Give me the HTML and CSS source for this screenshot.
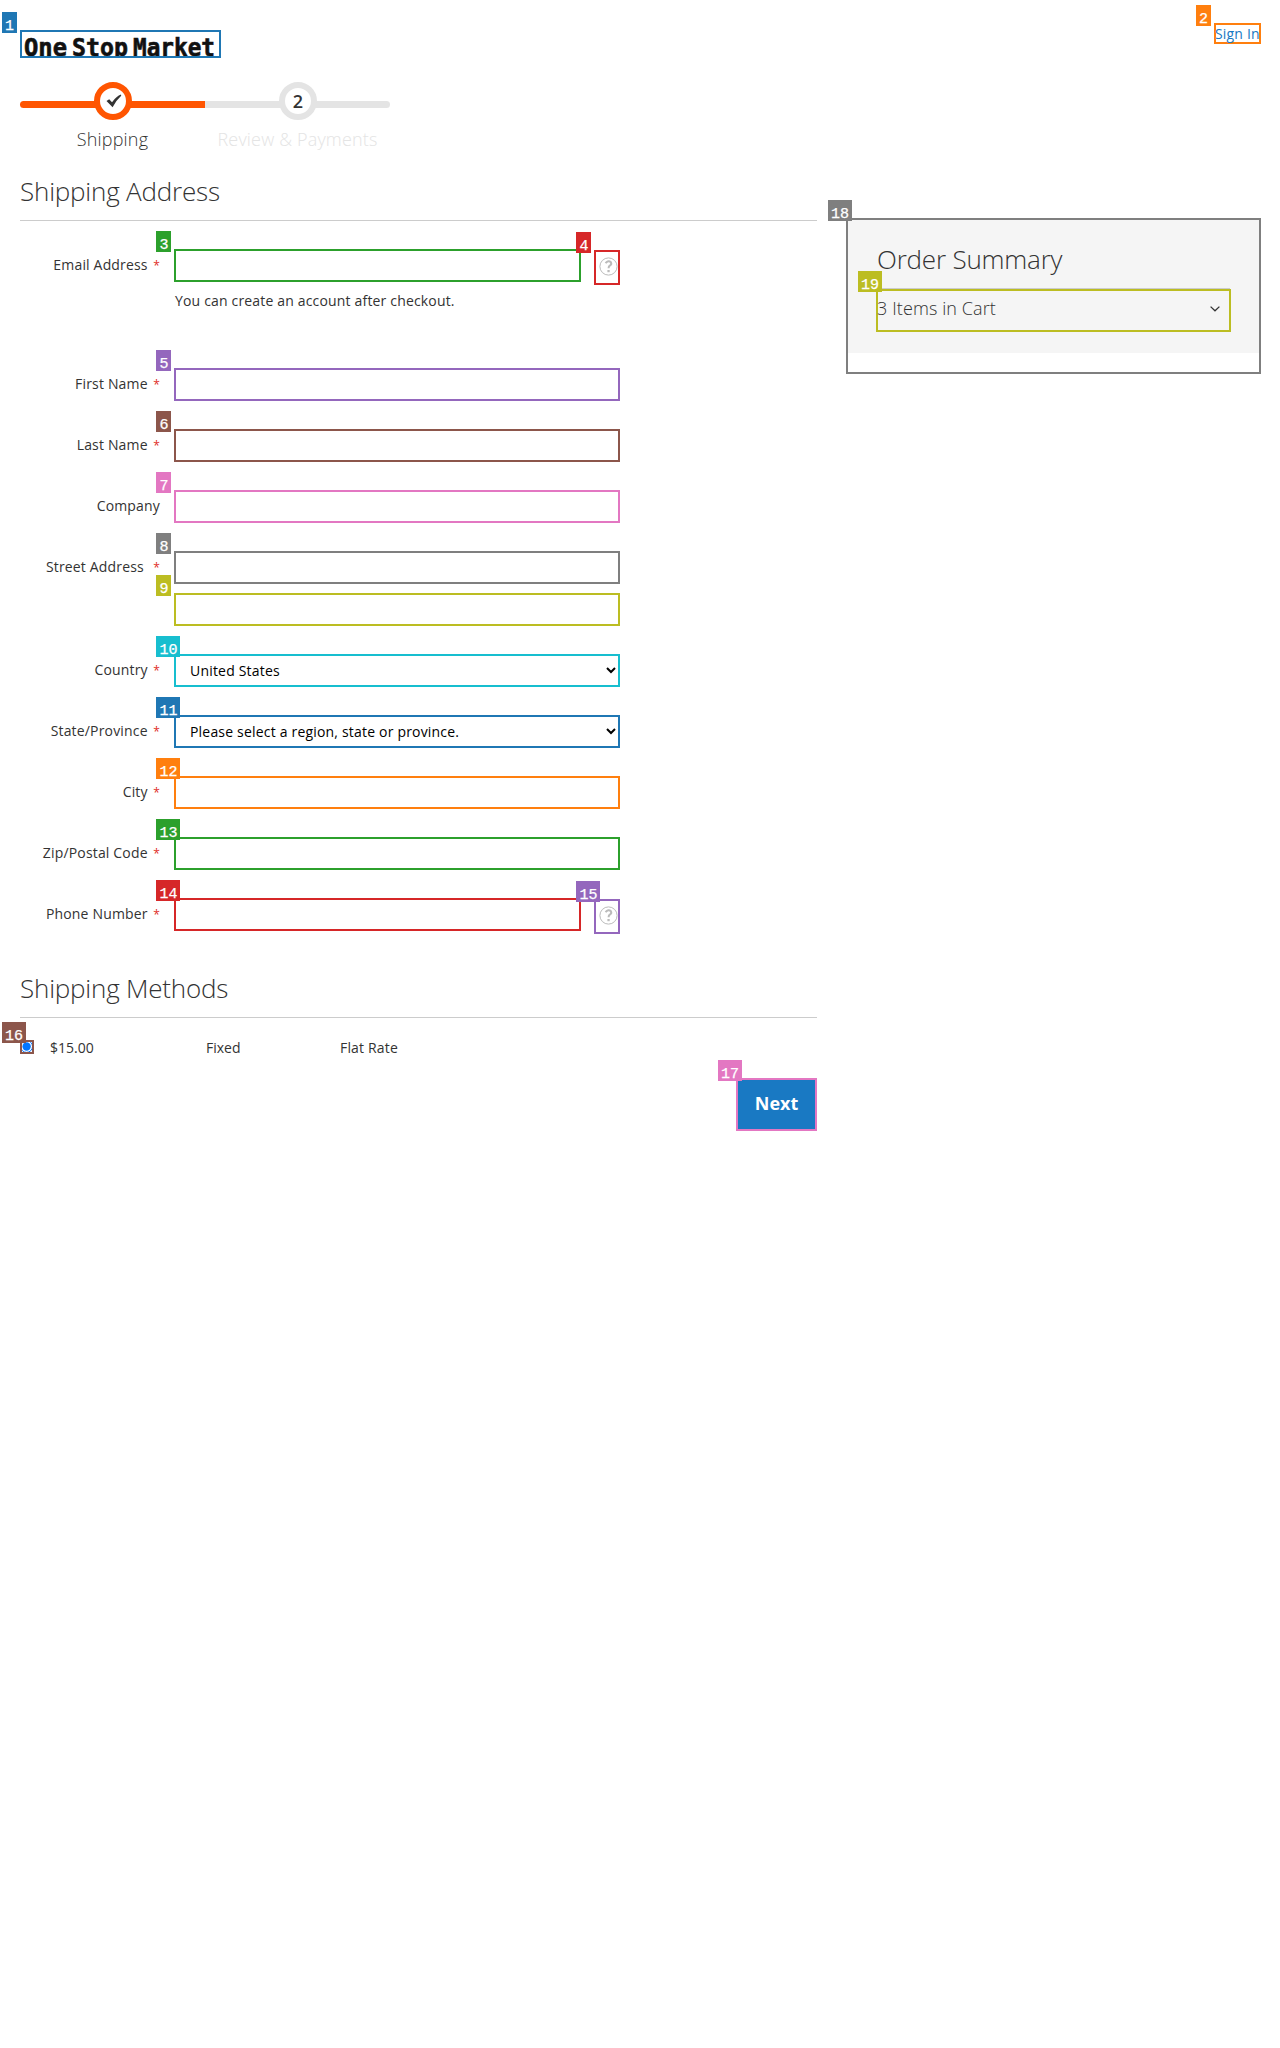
FILE: index.html
```html
<!DOCTYPE html>
<html lang="en">
<head>
<meta charset="utf-8">
<title>Checkout</title>
<link rel="stylesheet" href="styles.css">
</head>
<body>
<header class="header">
  <div class="mark logo blue"><span class="tag">1</span>
    <svg width="197" height="24" viewBox="0 0 197 24" role="img" aria-label="One Stop Market"><text class="logo-text" y="23.5"><tspan x="2" textLength="43" lengthAdjust="spacingAndGlyphs">One</tspan> <tspan x="50" textLength="56" lengthAdjust="spacingAndGlyphs">Stop</tspan> <tspan x="111" textLength="82" lengthAdjust="spacingAndGlyphs">Market</tspan></text></svg>
  </div>
  <a class="mark signin orange"><span class="tag">2</span>Sign In</a>
</header>

<ol class="progress">
  <li class="step active">
    <span class="circle"><svg width="16" height="14" viewBox="0 0 16 14"><path d="M.5 7 3.2 5.3 6 8.2Q10.5 2.2 15 .6L15.2 1.8Q10.5 6 6.6 13.2Z" fill="#333"/></svg></span>
    <span class="step-label">Shipping</span>
  </li>
  <li class="step">
    <span class="circle">2</span>
    <span class="step-label">Review &amp; Payments</span>
  </li>
</ol>

<div class="columns">
  <main class="main">
    <h2 class="title">Shipping Address</h2>
    <form class="form">
      <div class="row email">
        <label class="label">Email Address<i>*</i></label>
        <div class="control short">
          <div class="mark field green"><span class="tag">3</span></div>
          <div class="mark help red"><span class="tag">4</span><svg width="19" height="19" viewBox="0 0 19 19"><circle cx="9.5" cy="9.5" r="8.6" fill="none" stroke="#bbb"/><path d="M6.5 6.2Q9.4 2.7 11.9 5.2 13 7.3 10.8 8.6 9.6 9.3 9.6 11.2" fill="none" stroke="#bbb" stroke-width="2"/><path d="M8.4 13h2.3v2.2H8.4z" fill="#bbb"/></svg></div>
          <p class="note">You can create an account after checkout.</p>
        </div>
      </div>
      <div class="row"><label class="label">First Name<i>*</i></label><div class="mark field purple"><span class="tag">5</span></div></div>
      <div class="row"><label class="label">Last Name<i>*</i></label><div class="mark field brown"><span class="tag">6</span></div></div>
      <div class="row"><label class="label">Company</label><div class="mark field pink"><span class="tag">7</span></div></div>
      <div class="row">
        <label class="label">Street Address&nbsp;<i>*</i></label>
        <div class="control stack">
          <div class="mark field gray"><span class="tag">8</span></div>
          <div class="mark field olive"><span class="tag">9</span></div>
        </div>
      </div>
      <div class="row"><label class="label">Country<i>*</i></label><div class="mark field cyan"><span class="tag">10</span><select class="select"><option>United States</option></select></div></div>
      <div class="row"><label class="label">State/Province<i>*</i></label><div class="mark field blue"><span class="tag">11</span><select class="select"><option>Please select a region, state or province.</option></select></div></div>
      <div class="row"><label class="label">City<i>*</i></label><div class="mark field orange"><span class="tag">12</span></div></div>
      <div class="row"><label class="label">Zip/Postal Code<i>*</i></label><div class="mark field green"><span class="tag">13</span></div></div>
      <div class="row">
        <label class="label">Phone Number<i>*</i></label>
        <div class="control short">
          <div class="mark field red"><span class="tag">14</span></div>
          <div class="mark help purple"><span class="tag">15</span><svg width="19" height="19" viewBox="0 0 19 19"><circle cx="9.5" cy="9.5" r="8.6" fill="none" stroke="#bbb"/><path d="M6.5 6.2Q9.4 2.7 11.9 5.2 13 7.3 10.8 8.6 9.6 9.3 9.6 11.2" fill="none" stroke="#bbb" stroke-width="2"/><path d="M8.4 13h2.3v2.2H8.4z" fill="#bbb"/></svg></div>
        </div>
      </div>
    </form>

    <h2 class="title">Shipping Methods</h2>
    <div class="methods">
      <div class="mark radio brown"><span class="tag">16</span><svg width="10" height="10" viewBox="0 0 10 10"><path d="M0 0h10v10H0z" fill="#fff"/><circle cx="4.6" cy="4.5" r="5.9" fill="none" stroke="#0075ff"/><circle cx="4.6" cy="4.5" r="4.2" fill="#0075ff"/></svg></div>
      <span class="price">$15.00</span><span class="method">Fixed</span><span>Flat Rate</span>
    </div>
    <button class="mark next pink"><span class="tag">17</span>Next</button>
  </main>

  <aside class="mark sidebar gray"><span class="tag">18</span>
    <div class="summary">
      <h2 class="summary-title">Order Summary</h2>
      <div class="mark items olive"><span class="tag">19</span><span class="count">3 Items in Cart</span>
        <svg width="10" height="6" viewBox="0 0 10 6"><path d="M.6.6 5 4.8 9.4.6" fill="none" stroke="#333" stroke-width="1.3"/></svg>
      </div>
    </div>
  </aside>
</div>
</body>
</html>
```
FILE: styles.css
```css
* { box-sizing: border-box; }
body { margin: 0; padding: 23px 19px 0 20px; min-height: 2048px; background: #fff; color: #333; font: 14px/20px "Open Sans", sans-serif; letter-spacing: .17px; }

/* numbered outlines */
.mark { position: relative; border: 2px solid var(--c); }
.tag { position: absolute; z-index: 2; left: -20px; top: -20px; height: 21px; padding: 5px 3px 0; background: var(--c); color: #fff; font: 15px/19px "Liberation Mono", monospace; letter-spacing: 0; -webkit-text-stroke: .25px #fff; }
.field > .tag, .help > .tag { padding-left: 3.5px; padding-right: 2.5px; }
.blue { --c: #1f77b4; }
.orange { --c: #ff7f0e; }
.green { --c: #2ca02c; }
.red { --c: #d62728; }
.purple { --c: #9467bd; }
.brown { --c: #8c564b; }
.pink { --c: #e377c2; }
.gray { --c: #7f7f7f; }
.olive { --c: #bcbd22; }
.cyan { --c: #17becf; }

.header { display: flex; justify-content: space-between; align-items: flex-start; height: 59px; }
.logo { width: 201px; height: 28px; margin-top: 7px; }
.logo svg { display: block; }
.logo-text { font: bold 24px "DejaVu Sans Mono", monospace; letter-spacing: 0; fill: #111; stroke: #111; stroke-width: .6px; }
.signin { width: 47px; height: 21px; color: #1979c3; line-height: 17px; white-space: nowrap; text-indent: -1px; }
.signin .tag { text-indent: 0; line-height: 19px; }

.progress { display: flex; list-style: none; margin: 0; padding: 0; height: 89px; }
.step { width: 185px; display: flex; flex-direction: column; align-items: center; font-size: 18px; color: #e4e4e4; }
.step.active { color: #333; }
.step::before { content: ""; align-self: stretch; height: 7px; margin: 19px 0 -26px; background: #e4e4e4; border-radius: 0 4px 4px 0; }
.step.active::before { background: #ff5501; border-radius: 4px 0 0 4px; }
.circle { position: relative; display: flex; align-items: center; justify-content: center; width: 38px; height: 38px; border: 6px solid #e4e4e4; border-radius: 50%; background: #fff; color: #333; font-weight: 600; padding-left: 1px; }
.active .circle { border-color: #ff5501; padding-left: 3px; }
.step-label { margin-top: 7px; line-height: 25px; font-weight: 300; }

.columns { display: flex; justify-content: space-between; align-items: flex-start; }
.main { width: 797px; display: flex; flex-direction: column; }
.title, .summary-title { margin: 0; font-size: 26px; font-weight: 300; line-height: 36px; letter-spacing: -.2px; }
.title { height: 50px; padding-top: 2px; border-bottom: 1px solid #ccc; }
.form { padding-top: 28px; height: 747px; }
.row { display: flex; gap: 13px; margin-bottom: 28px; }
.email { height: 91px; }
.label { width: 141px; text-align: right; padding: 6px 1px 0 0; }
.label i { margin-left: 5.5px; color: #e02b27; font-size: 12px; font-style: normal; }
.field { width: 446px; height: 33px; }
.control { width: 446px; }
.short { display: flex; flex-wrap: wrap; justify-content: space-between; align-items: flex-start; align-content: flex-start; }
.short .field { width: 407px; }
.help { width: 26px; height: 35px; margin-top: 1px; }
.help svg { display: block; margin: 5px 0 0 2.5px; }
.note { margin: 6px 0 0 1px; width: 100%; }
.stack { display: flex; flex-direction: column; gap: 9px; }
.select { display: block; width: calc(100% + 1px); height: 29px; border: 0; padding: 0 10px; background: transparent; color: #000; font: 14px/20px "Open Sans", sans-serif; letter-spacing: .19px; }

.methods { display: flex; align-items: flex-start; padding-top: 22px; height: 60px; }
.methods span:not(.tag) { margin-top: -2px; }
.radio { width: 14px; height: 14px; }
.radio svg { display: block; }
.price { width: 156px; margin-left: 16px; letter-spacing: 0; }
.method { width: 134px; letter-spacing: 0; }
.next { align-self: flex-end; width: 81px; height: 53px; padding: 0 0 4px; background: #1979c3; color: #fff; font: 700 18px/24px "Open Sans", sans-serif; }

.sidebar { width: 415px; height: 156px; margin-top: 47px; }
.summary { height: 133px; padding: 21px 28px 0; background: #f5f5f5; }
.summary-title { height: 48px; border-bottom: 1px solid #ccc; margin-left: 1px; margin-right: 1px; }
.items { display: flex; justify-content: space-between; padding: 5px 9px 0 0; width: 355px; height: 43px; font-size: 18px; font-weight: 300; line-height: 25px; letter-spacing: .1px; }
.count { margin-left: -1px; }
.items svg { margin-top: 10px; }
```
